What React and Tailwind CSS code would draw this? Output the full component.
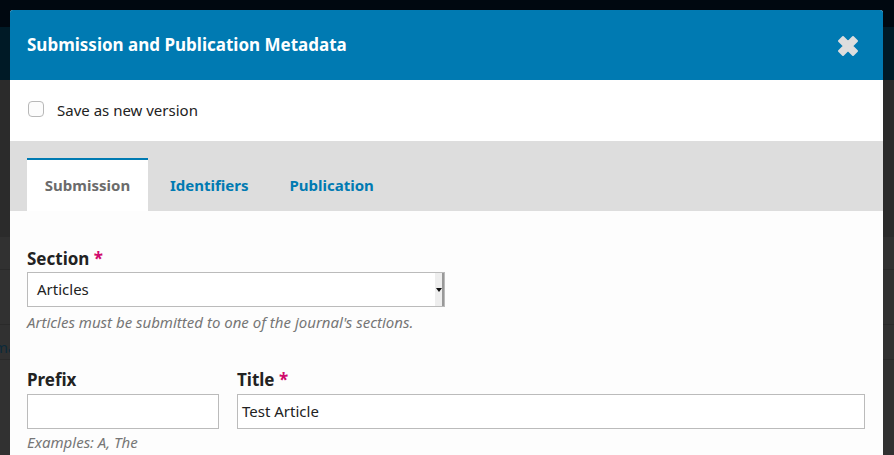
import React from 'react';

const font = { fontFamily: '"Noto Sans", "Open Sans", sans-serif' };

const App = () => {
    return (
        <div className="relative w-[894px] h-[455px] overflow-hidden bg-[#313131]" style={font}>
            {/* Dimmed page behind the modal */}
            <div className="flex flex-col h-full">
                <div className="h-[27px] bg-[#000810]" />
                <div className="h-[53px] bg-[#001a26]" />
                <div className="h-[157px] bg-[#2b2b2b]" />
                <div className="h-[33px] bg-[#313131] border-b border-[#2a2a2a]" />
                <div className="h-[55px] bg-[#313131] border-b border-[#2a2a2a]" />
                <div className="h-[35px] bg-[#313131] border-b border-[#2a2a2a] flex items-end">
                    <span className="text-[15px] text-[#0c2a3a] -ml-[6px] leading-none pb-[4px]">ma</span>
                </div>
                <div className="flex-1 bg-[#313131]" />
            </div>

            {/* Modal */}
            <div className="absolute left-[10px] top-[10px] w-[873px] h-[460px] rounded-t-[3px] overflow-hidden bg-[#fdfdfd] flex flex-col">
                <div className="h-[70px] bg-[#007ab2] flex items-center justify-between pl-[17px] pr-[22px] shrink-0">
                    <h1 className="text-[17px] font-bold text-white">Submission and Publication Metadata</h1>
                    <svg width="26" height="26" viewBox="0 0 26 26" className="mt-[1px]">
                        <path d="M4 8 L8 4 L13 9 L18 4 L22 8 L17 13 L22 18 L18 22 L13 17 L8 22 L4 18 L9 13 Z" fill="#dddddd" stroke="#dddddd" strokeWidth="2" strokeLinejoin="round" />
                    </svg>
                </div>

                <div className="h-[61px] bg-white flex items-center pl-[18px] shrink-0">
                    <span className="w-[16px] h-[16px] rounded-[4px] border border-[#b8b8b8] bg-[#fcfcfc] mt-[-3px]" />
                    <span className="ml-[13px] text-[15px] text-[#222]">Save as new version</span>
                </div>

                <div className="h-[70px] bg-[#dddddd] flex items-end pl-[17px] shrink-0">
                    <div className="h-[53px] w-[121px] bg-white border-t-2 border-[#007ab2] flex items-center justify-center text-[15px] font-bold text-[#6b6b6b]">
                        Submission
                    </div>
                    <div className="h-[53px] flex items-center text-[15px] font-bold text-[#007ab2] ml-[22px] pt-[1px]">Identifiers</div>
                    <div className="h-[53px] flex items-center text-[15px] font-bold text-[#007ab2] ml-[41px] pt-[1px]">Publication</div>
                </div>

                <div className="pl-[17px] pr-[18px] pt-[36px]">
                    <label className="block text-[17px] font-bold text-[#222] leading-[24px]">
                        Section <span className="text-[#d00a6c]">*</span>
                    </label>
                    <div className="mt-[1px] w-[418px] h-[35px] border border-[#bbb] bg-white flex items-center">
                        <span className="flex-1 pl-[9px] text-[15px] text-[#222]">Articles</span>
                        <div className="w-[9px] h-full bg-[#eeeeee] border-r-2 border-[#999] flex items-center justify-center">
                            <svg width="6" height="4" viewBox="0 0 6 4"><path d="M0 0 H6 L3 4 Z" fill="#111" /></svg>
                        </div>
                    </div>
                    <p className="mt-[6px] text-[15px] italic text-[#767676] leading-[18px]">Articles must be submitted to one of the journal's sections.</p>

                    <div className="mt-[37px] flex gap-[18px]">
                        <div className="w-[192px]">
                            <label className="block text-[17px] font-bold text-[#222] leading-[24px]">Prefix</label>
                            <div className="mt-[2px] h-[35px] border border-[#bbb] bg-white" />
                            <p className="mt-[4px] text-[15px] italic text-[#767676] leading-[18px]">Examples: A, The</p>
                        </div>
                        <div className="flex-1">
                            <label className="block text-[17px] font-bold text-[#222] leading-[24px]">
                                Title <span className="text-[#d00a6c]">*</span>
                            </label>
                            <div className="mt-[2px] h-[35px] border border-[#bbb] bg-white flex items-center pl-[4px] text-[15px] text-[#222]">
                                Test Article
                            </div>
                        </div>
                    </div>
                </div>
            </div>
        </div>
    );
};

export default App;
